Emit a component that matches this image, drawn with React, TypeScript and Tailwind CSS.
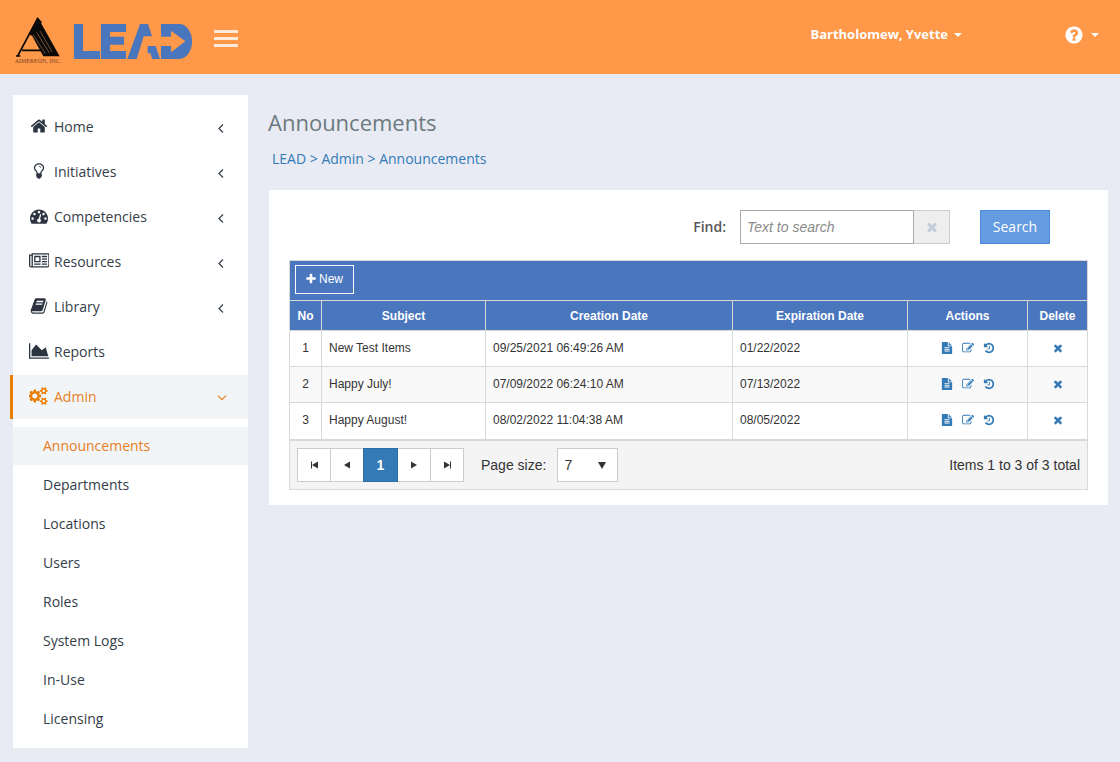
import { useState } from 'react'
import clsx from 'clsx'

const ICONS = {
  home: 'M1472 992v480q0 26-19 45t-45 19h-384v-384h-256v384h-384q-26 0-45-19t-19-45v-480q0-1 .5-3t.5-3l575-474 575 474q1 2 1 6zm223-69l-62 74q-8 9-21 11h-3q-13 0-21-7l-692-577-692 577q-12 8-24 7-13-2-21-11l-62-74q-8-10-7-23.5t11-21.5l719-599q32-26 76-26t76 26l244 204v-195q0-14 9-23t23-9h192q14 0 23 9t9 23v408l219 182q10 8 11 21.5t-7 23.5z',
  bulb: 'M1120 576q0 13-9.5 22.5t-22.5 9.5-22.5-9.5-9.5-22.5q0-46-54-71t-106-25q-13 0-22.5-9.5t-9.5-22.5 9.5-22.5 22.5-9.5q50 0 99.5 16t87 54 37.5 90zm160 0q0-72-34.5-134t-90-101.5-123-62-136.5-22.5-136.5 22.5-123 62-90 101.5-34.5 134q0 101 68 180 10 11 30.5 33t30.5 33q128 153 141 298h228q13-145 141-298 10-11 30.5-33t30.5-33q68-79 68-180zm128 0q0 155-103 268-45 49-74.5 87t-59.5 95.5-34 107.5q47 28 47 82 0 37-25 64 25 27 25 64 0 52-45 81 13 23 13 47 0 46-31.5 71t-77.5 25q-20 44-60 70t-87 26-87-26-60-70q-46 0-77.5-25t-31.5-71q0-24 13-47-45-29-45-81 0-37 25-64-25-27-25-64 0-54 47-82-4-50-34-107.5t-59.5-95.5-74.5-87q-103-113-103-268 0-99 44.5-184.5t117-142 164-89 186.5-32.5 186.5 32.5 164 89 117 142 44.5 184.5z',
  gauge: 'M384 1152q0-53-37.5-90.5t-90.5-37.5-90.5 37.5-37.5 90.5 37.5 90.5 90.5 37.5 90.5-37.5 37.5-90.5zm192-448q0-53-37.5-90.5t-90.5-37.5-90.5 37.5-37.5 90.5 37.5 90.5 90.5 37.5 90.5-37.5 37.5-90.5zm428 481l101-382q6-26-7.5-48.5t-38.5-29.5-48 6.5-30 39.5l-101 382q-60 5-107 43.5t-63 98.5q-20 77 20 146t117 89 146-20 89-117q16-60-6-117t-72-91zm660-33q0-53-37.5-90.5t-90.5-37.5-90.5 37.5-37.5 90.5 37.5 90.5 90.5 37.5 90.5-37.5 37.5-90.5zm-640-640q0-53-37.5-90.5t-90.5-37.5-90.5 37.5-37.5 90.5 37.5 90.5 90.5 37.5 90.5-37.5 37.5-90.5zm448 192q0-53-37.5-90.5t-90.5-37.5-90.5 37.5-37.5 90.5 37.5 90.5 90.5 37.5 90.5-37.5 37.5-90.5zm320 448q0 261-141 483-19 29-54 29h-1402q-35 0-54-29-141-221-141-483 0-182 71-348t191-286 286-191 348-71 348 71 286 191 191 286 71 348z',
  news: 'M1024 512h-384v384h384v-384zm128 640v128h-640v-128h640zm0-768v640h-640v-640h640zm640 768v128h-512v-128h512zm0-256v128h-512v-128h512zm0-256v128h-512v-128h512zm0-256v128h-512v-128h512zm-1536 960v-960h-128v960q0 26 19 45t45 19 45-19 19-45zm1664 0v-1088h-1536v1088q0 33-11 64h1483q26 0 45-19t19-45zm128-1216v1216q0 80-56 136t-136 56h-1664q-80 0-136-56t-56-136v-1088h256v-128h1792z',
  book: 'M1703 478q40 57 18 129l-275 906q-19 64-76.5 107.5t-122.5 43.5h-923q-77 0-148.5-53.5t-99.5-131.5q-24-67-2-127 0-4 3-27t4-37q1-8-3-21.5t-3-19.5q2-11 8-21t16.5-23.5 16.5-23.5q23-38 45-91.5t30-91.5q3-10 .5-30t-.5-28q3-11 17-28t17-23q21-36 42-92t25-90q1-9-2.5-32t.5-28q4-13 22-30.5t22-22.5q19-26 42.5-84.5t27.5-96.5q1-8-3-25.5t-2-26.5q2-8 9-18t18-23 17-21q8-12 16.5-30.5t15-35 16-36 19.5-32 26.5-23.5 36-11.5 47.5 5.5l-1 3q38-9 51-9h761q74 0 114 56t18 130l-274 906q-36 119-71.5 153.5t-128.5 34.5h-869q-27 0-38 15-11 16-1 43 24 70 144 70h923q29 0 56-15.5t35-41.5l300-987q7-22 5-57 38 15 59 43zm-1064 2q-4 13 2 22.5t20 9.5h608q13 0 25.5-9.5t16.5-22.5l21-64q4-13-2-22.5t-20-9.5h-608q-13 0-25.5 9.5t-16.5 22.5zm-83 256q-4 13 2 22.5t20 9.5h608q13 0 25.5-9.5t16.5-22.5l21-64q4-13-2-22.5t-20-9.5h-608q-13 0-25.5 9.5t-16.5 22.5z',
  area: 'M2048 1536v128h-2048v-1536h128v1408h1920zm-384-1024l256 896h-1664v-576l448-576 576 576z',
  cogs: 'M832 896q0-106-75-181t-181-75-181 75-75 181 75 181 181 75 181-75 75-181zm768 512q0-52-38-90t-90-38-90 38-38 90q0 53 37.5 90.5t90.5 37.5 90.5-37.5 37.5-90.5zm0-1024q0-52-38-90t-90-38-90 38-38 90q0 53 37.5 90.5t90.5 37.5 90.5-37.5 37.5-90.5zm-384 421v185q0 10-7 19.5t-16 10.5l-155 24q-11 35-32 76 34 48 90 115 7 11 7 20 0 12-7 19-23 30-82.5 89.5t-78.5 59.5q-11 0-21-7l-115-90q-37 19-77 31-11 108-23 155-7 24-30 24h-186q-11 0-20-7.5t-10-17.5l-23-153q-34-10-75-31l-118 89q-7 7-20 7-11 0-21-8-144-133-144-160 0-9 7-19 10-14 41-53t47-61q-23-44-35-82l-152-24q-10-1-17-9.5t-7-19.5v-185q0-10 7-19.5t16-10.5l155-24q11-35 32-76-34-48-90-115-7-11-7-20 0-12 7-20 22-30 82-89t79-59q11 0 21 7l115 90q34-18 77-32 11-108 23-154 7-24 30-24h186q11 0 20 7.5t10 17.5l23 153q34 10 75 31l118-89q8-7 20-7 11 0 21 8 144 133 144 160 0 8-7 19-12 16-42 54t-45 60q23 48 34 82l152 23q10 2 17 10.5t7 19.5zm640 533v140q0 16-149 31-12 27-30 52 51 113 51 138 0 4-4 7-122 71-124 71-8 0-46-47t-52-68q-20 2-30 2t-30-2q-14 21-52 68t-46 47q-2 0-124-71-4-3-4-7 0-25 51-138-18-25-30-52-149-15-149-31v-140q0-16 149-31 13-29 30-52-51-113-51-138 0-4 4-7 4-2 35-20t59-34 30-16q8 0 46 46.5t52 67.5q20-2 30-2t30 2q51-71 92-112l6-2q4 0 124 70 4 3 4 7 0 25-51 138 17 23 30 52 149 15 149 31zm0-1024v140q0 16-149 31-12 27-30 52 51 113 51 138 0 4-4 7-122 71-124 71-8 0-46-47t-52-68q-20 2-30 2t-30-2q-14 21-52 68t-46 47q-2 0-124-71-4-3-4-7 0-25 51-138-18-25-30-52-149-15-149-31v-140q0-16 149-31 13-29 30-52-51-113-51-138 0-4 4-7 4-2 35-20t59-34 30-16q8 0 46 46.5t52 67.5q20-2 30-2t30 2q51-71 92-112l6-2q4 0 124 70 4 3 4 7 0 25-51 138 17 23 30 52 149 15 149 31z',
  help: 'M1024 1376v-192q0-14-9-23t-23-9h-192q-14 0-23 9t-9 23v192q0 14 9 23t23 9h192q14 0 23-9t9-23zm256-672q0-88-55.5-163t-138.5-116-170-41q-243 0-371 213-15 24 8 42l132 100q7 6 19 6 16 0 25-12 53-68 86-92 34-24 86-24 48 0 85.5 26t37.5 59q0 38-20 61t-68 45q-63 28-115.5 86.5t-52.5 125.5v36q0 14 9 23t23 9h192q14 0 23-9t9-23q0-19 21.5-49.5t54.5-49.5q32-18 49-28.5t46-35 44.5-48 28-60.5 12.5-81zm384 192q0 209-103 385.5t-279.5 279.5-385.5 103-385.5-103-279.5-279.5-103-385.5 103-385.5 279.5-279.5 385.5-103 385.5 103 279.5 279.5 103 385.5z',
  times: 'M1490 1322q0 40-28 68l-136 136q-28 28-68 28t-68-28l-294-294-294 294q-28 28-68 28t-68-28l-136-136q-28-28-28-68t28-68l294-294-294-294q-28-28-28-68t28-68l136-136q28-28 68-28t68 28l294 294 294-294q28-28 68-28t68 28l136 136q28 28 28 68t-28 68l-294 294 294 294q28 28 28 68z',
  plus: 'M1600 736v192q0 40-28 68t-68 28h-416v416q0 40-28 68t-68 28h-192q-40 0-68-28t-28-68v-416h-416q-40 0-68-28t-28-68v-192q0-40 28-68t68-28h416v-416q0-40 28-68t68-28h192q40 0 68 28t28 68v416h416q40 0 68 28t28 68z',
  file: 'M1596 476q14 14 28 36h-472v-472q22 14 36 28zm-476 164h544v1056q0 40-28 68t-68 28h-1344q-40 0-68-28t-28-68v-1600q0-40 28-68t68-28h800v544q0 40 28 68t68 28zm160 736v-64q0-14-9-23t-23-9h-704q-14 0-23 9t-9 23v64q0 14 9 23t23 9h704q14 0 23-9t9-23zm0-256v-64q0-14-9-23t-23-9h-704q-14 0-23 9t-9 23v64q0 14 9 23t23 9h704q14 0 23-9t9-23zm0-256v-64q0-14-9-23t-23-9h-704q-14 0-23 9t-9 23v64q0 14 9 23t23 9h704q14 0 23-9t9-23z',
  edit: 'M888 1184l116-116-152-152-116 116v56h96v96h56zm440-720q-16-16-33 1l-350 350q-17 17-1 33t33-1l350-350q17-17 1-33zm80 594v190q0 119-84.5 203.5t-203.5 84.5h-832q-119 0-203.5-84.5t-84.5-203.5v-832q0-119 84.5-203.5t203.5-84.5h832q63 0 117 25 15 7 18 23 3 17-9 29l-49 49q-14 14-32 8-23-6-45-6h-832q-66 0-113 47t-47 113v832q0 66 47 113t113 47h832q66 0 113-47t47-113v-126q0-13 9-22l64-64q15-15 35-7t20 29zm-96-738l288 288-672 672h-288v-288zm444 132l-92 92-288-288 92-92q28-28 68-28t68 28l152 152q28 28 28 68t-28 68z',
  history: 'M1664 896q0 156-61 298t-164 245-245 164-298 61q-172 0-327-72.5t-264-204.5q-7-10-6.5-22.5t8.5-20.5l137-138q10-9 25-9 16 2 23 12 73 95 179 147t225 52q104 0 198.5-40.5t163.5-109.5 109.5-163.5 40.5-198.5-40.5-198.5-109.5-163.5-163.5-109.5-198.5-40.5q-98 0-188 35.5t-160 101.5l137 138q31 30 14 69-17 40-59 40h-448q-26 0-45-19t-19-45v-448q0-42 40-59 39-17 69 14l130 129q107-101 244.5-156.5t284.5-55.5q156 0 298 61t245 164 164 245 61 298zm-640-288v448q0 14-9 23t-23 9h-320q-14 0-23-9t-9-23v-64q0-14 9-23t23-9h224v-352q0-14 9-23t23-9h64q14 0 23 9t9 23z',
}

type IconName = keyof typeof ICONS

function Icon({ name, className, width = 1792 }: { name: IconName; className?: string; width?: number }) {
  return (
    <svg className={className} viewBox={`0 0 ${width} 1792`} fill="currentColor" aria-hidden="true">
      <path d={ICONS[name]} />
    </svg>
  )
}

function Caret() {
  return (
    <svg className="w-2 h-1" viewBox="0 0 8 4" fill="currentColor" aria-hidden="true">
      <path d="M0 0h8L4 4z" />
    </svg>
  )
}

const menu: { label: string; icon: IconName; width?: number; arrow: boolean; active?: boolean }[] = [
  { label: 'Home', icon: 'home', arrow: true },
  { label: 'Initiatives', icon: 'bulb', arrow: true },
  { label: 'Competencies', icon: 'gauge', arrow: true },
  { label: 'Resources', icon: 'news', width: 2048, arrow: true },
  { label: 'Library', icon: 'book', arrow: true },
  { label: 'Reports', icon: 'area', width: 2048, arrow: false },
  { label: 'Admin', icon: 'cogs', width: 1920, arrow: true, active: true },
]

const adminMenu = ['Announcements', 'Departments', 'Locations', 'Users', 'Roles', 'System Logs', 'In-Use', 'Licensing']

const announcements = [
  { no: 1, subject: 'New Test Items', created: '09/25/2021 06:49:26 AM', expires: '01/22/2022' },
  { no: 2, subject: 'Happy July!', created: '07/09/2022 06:24:10 AM', expires: '07/13/2022' },
  { no: 3, subject: 'Happy August!', created: '08/02/2022 11:04:38 AM', expires: '08/05/2022' },
]

function Header() {
  return (
    <header className="flex h-[74px] items-center bg-[#ff9848] pl-[14px] pr-[21px] text-white">
      <div className="mt-2 flex w-[48px] flex-col items-center">
        <svg className="w-[44px] h-[40px]" viewBox="0 0 132 120" aria-hidden="true">
          <path d="M65 1l66 117H82L45 50z" fill="#0a0a0a" />
          <path d="M65 4L5 117M0 117h13M18 100h64" stroke="#0a0a0a" strokeWidth="5" fill="none" />
          <path d="M65 1L38 52l10 4 30-40z" fill="#0a0a0a" />
          <path d="M52 54l36 56M62 46l38 62M72 42l36 62" stroke="#d98a50" strokeWidth="1.6" fill="none" />
        </svg>
        <span className="font-['Liberation_Serif',serif] text-[6px] leading-[8px] whitespace-nowrap text-[#7a4526]">
          AIMEREON, INC.
        </span>
      </div>
      <svg className="ml-3 mt-2 w-[118px] h-[35px]" viewBox="222 72 354 105" fill="#4a76be" role="img" aria-label="LEAD">
        <path d="M222 72h27v81h51v24h-78z" />
        <path d="M303 72h75v24h-48v14h42v24h-42v19h48v24h-75z" />
        <path d="M420 72h24l12 37h-25l-21 68h-28z" />
        <path d="M443 138h24l13 39h-23l-6-17h-8z" />
        <path d="M483 72h55a38 52 0 0 1 0 105h-55v-39h30v19l43-33-43-32v18h-30z" />
      </svg>
      <button className="mt-0.5 ml-[22px] flex h-[17px] w-6 flex-col justify-between" aria-label="Toggle menu">
        <span className="h-[3px] w-full bg-[#ffe9d8]" />
        <span className="h-[3px] w-full bg-[#ffe9d8]" />
        <span className="h-[3px] w-full bg-[#ffe9d8]" />
      </button>
      <div className="mb-1 ml-auto flex items-center gap-[102px]">
        <button className="flex items-center gap-1.5 text-[13px] font-bold">
          Bartholomew, Yvette
          <Caret />
        </button>
        <button className="flex items-center gap-[7px]" aria-label="Help">
          <Icon name="help" className="size-5" />
          <Caret />
        </button>
      </div>
    </header>
  )
}

function Sidebar() {
  return (
    <nav className="w-[235px] shrink-0 bg-white py-2.5 text-sm text-[#333d48]">
      <ul>
        {menu.map((item) => (
          <li key={item.label} className="mb-px last:mb-0">
            <a
              href="#"
              className={clsx(
                'flex h-11 items-center pr-[21px]',
                item.active ? '-ml-[3px] border-l-[3px] border-[#e87e04] bg-[#f1f5f8] pl-4 text-[#e87e22]' : 'pl-4'
              )}
            >
              <span className={clsx('flex w-5 justify-center', item.active ? 'text-[#e87e04]' : 'text-[#2b3440]')}>
                <Icon name={item.icon} width={item.width} className="mb-0.5 h-[18px] w-auto shrink-0" />
              </span>
              <span className="ml-[5px]">{item.label}</span>
              {item.arrow && (
                <svg
                  className={clsx('mt-0.5 ml-auto', item.active ? 'h-[6px] w-[10px]' : 'mr-[3px] h-[9px] w-[6px]')}
                  viewBox={item.active ? '0 0 10 6' : '0 0 6 9'}
                  fill="none"
                  stroke="currentColor"
                  strokeWidth="1.2"
                  aria-hidden="true"
                >
                  <path d={item.active ? 'M1 .7l4 4 4-4' : 'M5 .5l-4 4 4 4'} />
                </svg>
              )}
            </a>
          </li>
        ))}
      </ul>
      <ul className="mt-2">
        {adminMenu.map((label, i) => (
          <li key={label} className="mb-px last:mb-0">
            <a
              href="#"
              className={clsx('flex h-[38px] items-center pl-[30px]', i === 0 && 'bg-[#f1f5f8] text-[#e87e22]')}
            >
              {label}
            </a>
          </li>
        ))}
      </ul>
    </nav>
  )
}

function Pager() {
  const button = 'flex h-[34px] w-[34px] items-center justify-center border border-[#ccc] bg-white -ml-px first:ml-0'
  return (
    <div className="flex h-[49px] items-center border-t border-[#d9d9d9] bg-[#f4f4f4] px-[7px] text-sm text-[#333]">
      <div className="flex">
        <button className={button} aria-label="First page">
          <svg className="w-2 h-2" viewBox="0 0 8 8" fill="currentColor"><path d="M1 .5h1v7H1zM8 .5v7L2 4z" /></svg>
        </button>
        <button className={button} aria-label="Previous page">
          <svg className="w-2 h-2" viewBox="0 0 8 8" fill="currentColor"><path d="M7 .5v7L1 4z" /></svg>
        </button>
        <button className="z-10 -ml-px h-[34px] w-[35px] border border-[#2e6da4] bg-[#337ab7] font-bold text-white">1</button>
        <button className={button} aria-label="Next page">
          <svg className="w-2 h-2" viewBox="0 0 8 8" fill="currentColor"><path d="M1 .5v7L7 4z" /></svg>
        </button>
        <button className={button} aria-label="Last page">
          <svg className="w-2 h-2" viewBox="0 0 8 8" fill="currentColor"><path d="M7 .5h1v7H7zM1 .5v7L7 4z" /></svg>
        </button>
      </div>
      <label htmlFor="page-size" className="ml-[17px]">Page size:</label>
      <div className="relative ml-[11px]">
        <select
          id="page-size"
          defaultValue="7"
          className="h-[34px] w-[61px] appearance-none border border-[#ccc] bg-white pl-1.5"
        >
          <option>7</option>
          <option>10</option>
          <option>20</option>
        </select>
        <svg className="pointer-events-none absolute top-[14px] right-3 w-2 h-[7px]" viewBox="0 0 8 7" fill="currentColor">
          <path d="M0 0h8L4 7z" />
        </svg>
      </div>
      <span className="ml-auto">Items 1 to 3 of 3 total</span>
    </div>
  )
}

function AnnouncementTable() {
  const head = 'h-[30px] border-t border-l border-[#d9d9d9] first:border-l-0'
  const cell = 'h-9 border-t border-l border-[#d9d9d9] px-[7px] pb-0.5 first:border-l-0'
  return (
    <div className="mt-4 border border-[#d9d9d9] font-['Liberation_Sans',Arial,sans-serif]">
      <div className="flex h-[39px] items-start bg-[#4a76be] px-[5px] pt-1">
        <button className="flex h-[29px] items-center gap-0.5 border border-white pr-2.5 pb-0.5 pl-[9px] text-xs text-white">
          <Icon name="plus" className="size-3" />
          New
        </button>
      </div>
      <table className="w-full table-fixed border-separate border-spacing-0 text-xs text-[#333]">
        <colgroup>
          <col className="w-[31px]" />
          <col className="w-[164px]" />
          <col />
          <col className="w-[175px]" />
          <col className="w-[120px]" />
          <col className="w-[60px]" />
        </colgroup>
        <thead>
          <tr className="bg-[#4a76be] text-white">
            <th className={head}>No</th>
            <th className={head}>Subject</th>
            <th className={head}>Creation Date</th>
            <th className={head}>Expiration Date</th>
            <th className={head}>Actions</th>
            <th className={head}>Delete</th>
          </tr>
        </thead>
        <tbody>
          {announcements.map((row) => (
            <tr key={row.no} className="even:bg-[#f9f9f9] last:h-[37px]">
              <td className={clsx(cell, 'text-center')}>{row.no}</td>
              <td className={cell}>{row.subject}</td>
              <td className={cell}>{row.created}</td>
              <td className={cell}>{row.expires}</td>
              <td className={cell}>
                <div className="flex items-center justify-center gap-[9px] text-[#337ab7]">
                  <button aria-label="View"><Icon name="file" className="size-3" /></button>
                  <button aria-label="Edit"><Icon name="edit" className="size-3" /></button>
                  <button aria-label="History"><Icon name="history" className="size-3" /></button>
                </div>
              </td>
              <td className={cell}>
                <div className="flex justify-center text-[#337ab7]">
                  <button aria-label="Delete"><Icon name="times" className="size-3" /></button>
                </div>
              </td>
            </tr>
          ))}
        </tbody>
      </table>
      <div className="border-t border-[#d9d9d9]">
        <Pager />
      </div>
    </div>
  )
}

export default function App() {
  const [query, setQuery] = useState('')

  return (
    <div className="min-h-screen bg-[#e8ebf3] font-['Open_Sans',sans-serif]">
      <Header />
      <div className="flex items-start pt-[21px] pr-3 pb-3.5 pl-[13px]">
        <Sidebar />
        <main className="ml-[21px] min-w-0 flex-1">
          <h1 className="mt-[11px] -ml-px text-[22px] leading-8 text-[#6b7a80]">Announcements</h1>
          <div className="mt-[9px] ml-[3px] text-sm leading-6 text-[#337ab7]">
            <a href="#">LEAD</a> &gt; <a href="#">Admin</a> &gt; <a href="#">Announcements</a>
          </div>

          <section className="mt-[19px] bg-white pt-5 pr-5 pb-[15px] pl-5">
            <form className="mr-[38px] flex items-center justify-end" onSubmit={(e) => e.preventDefault()}>
              <label htmlFor="find" className="mr-[14px] text-sm font-semibold text-[#555]">Find:</label>
              <input
                id="find"
                type="text"
                value={query}
                onChange={(e) => setQuery(e.target.value)}
                placeholder="Text to search"
                className="h-[34px] w-[174px] border border-[#aaa] px-1.5 font-['Liberation_Sans',Arial,sans-serif] text-sm placeholder:text-[#8a8a8a] placeholder:italic"
              />
              <button
                type="button"
                aria-label="Clear"
                onClick={() => setQuery('')}
                className="flex h-[34px] w-9 items-center justify-center border border-l-0 border-[#ccc] bg-[#eee] text-[#c3cddb]"
              >
                <Icon name="times" className="size-[14px]" />
              </button>
              <button
                type="submit"
                className="ml-[30px] h-[34px] w-[70px] border border-[#4a8bdc] bg-[#659be0] text-sm text-white"
              >
                Search
              </button>
            </form>
            <AnnouncementTable />
          </section>
        </main>
      </div>
    </div>
  )
}
